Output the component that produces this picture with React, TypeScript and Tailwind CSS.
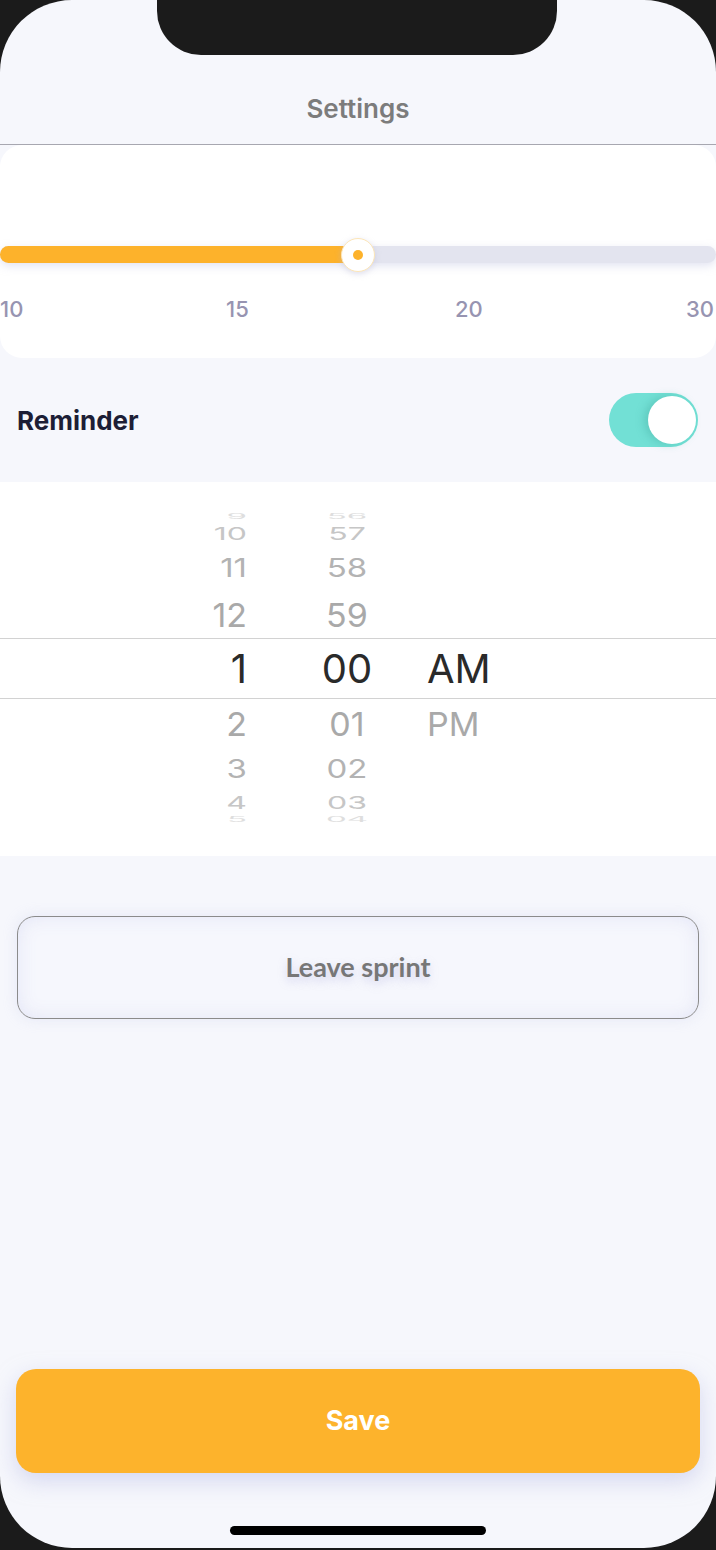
import React from "react";

type Row = {
  h: string;
  m: string;
  ap: string;
  band: string;
  text: string;
  scale: string;
};

const rows: Row[] = [
  { h: "9", m: "56", ap: "", band: "h-[14px]", text: "text-[33px] text-[#dedede]", scale: "scale-y-[0.22]" },
  { h: "10", m: "57", ap: "", band: "h-[21px]", text: "text-[32px] text-[#c6c6c6]", scale: "scale-y-[0.55]" },
  { h: "11", m: "58", ap: "", band: "h-[48px]", text: "text-[33px] text-[#b3b3b3]", scale: "scale-y-[0.78]" },
  { h: "12", m: "59", ap: "", band: "h-[45px]", text: "text-[34px] text-[#a9a9a9]", scale: "scale-y-[0.97]" },
];
const rowsBelow: Row[] = [
  { h: "2", m: "01", ap: "PM", band: "h-[50px]", text: "text-[34px] text-[#a9a9a9]", scale: "scale-y-[0.97]" },
  { h: "3", m: "02", ap: "", band: "h-[42px]", text: "text-[33px] text-[#b3b3b3]", scale: "scale-y-[0.78]" },
  { h: "4", m: "03", ap: "", band: "h-[25px]", text: "text-[32px] text-[#c6c6c6]", scale: "scale-y-[0.55]" },
  { h: "5", m: "04", ap: "", band: "h-[8px]", text: "text-[33px] text-[#dedede]", scale: "scale-y-[0.22]" },
];

function Band({ r }: { r: Row }) {
  return (
    <div className={`flex items-center overflow-hidden ${r.band}`}>
      <div className="w-[247px] text-right">
        <span className={`inline-block leading-none ${r.text} ${r.scale}`}>{r.h}</span>
      </div>
      <div className="ml-[50px] w-[100px] text-center">
        <span className={`inline-block leading-none ${r.text} ${r.scale}`}>{r.m}</span>
      </div>
      <div className="ml-[30px] text-left">
        <span className={`inline-block leading-none ${r.text} ${r.scale}`}>{r.ap}</span>
      </div>
    </div>
  );
}

export default function App() {
  return (
    <div className="w-[716px] h-[1550px] bg-[#1b1b1b]" style={{ fontFamily: "Inter, Roboto, sans-serif" }}>
      <div className="relative h-[1548px] rounded-[72px] bg-[#f6f7fc] overflow-hidden flex flex-col">
        {/* notch */}
        <div className="absolute left-[157px] top-0 w-[400px] h-[55px] bg-[#1b1b1b] rounded-b-[44px]" />

        {/* header */}
        <div className="h-[145px] pt-[96px] text-center border-b border-[#a7a7b0]">
          <span className="text-[26px] leading-[26px] font-semibold text-[#7c7c7c]">Settings</span>
        </div>

        {/* slider card */}
        <div className="h-[213px] bg-white rounded-[22px] flex flex-col pt-[101px]">
          <div className="relative h-[17px]">
            <div className="absolute inset-0 rounded-full bg-[#e3e4ef] shadow-[0_3px_8px_rgba(200,202,230,0.5)]" />
            <div className="absolute left-0 top-0 h-[17px] w-[358px] rounded-full bg-[#fdb22b]" />
            <div className="absolute left-[341px] top-[-8px] w-[34px] h-[34px] rounded-full bg-white border border-[#fde6b8] shadow-[0_2px_6px_rgba(180,180,210,0.4)] flex items-center justify-center">
              <div className="w-[10px] h-[10px] rounded-full bg-[#fdb22b]" />
            </div>
          </div>
          <div className="relative h-[24px] mt-[34px] text-[22px] leading-[24px] font-medium text-[#9794b1]">
            <span className="absolute left-0 top-0">10</span>
            <span className="absolute left-[226px] top-0">15</span>
            <span className="absolute left-[455px] top-0">20</span>
            <span className="absolute left-[686px] top-0">30</span>
          </div>
        </div>

        {/* reminder */}
        <div className="h-[124px] flex items-center justify-between pl-[17px] pr-[18px]">
          <span className="text-[26px] font-bold text-[#1d1e36]">Reminder</span>
          <div className="w-[89px] h-[54px] rounded-full bg-[#72e0d5] flex items-center justify-end pr-[2px]">
            <div className="w-[48px] h-[48px] rounded-full bg-white shadow-[-4px_0_8px_rgba(60,160,150,0.35)]" />
          </div>
        </div>

        {/* time picker */}
        <div className="bg-white pt-[28px] pb-[32px]" style={{ fontFamily: "Inter, 'Liberation Sans', sans-serif" }}>
          {rows.map((r, i) => (
            <Band key={"a" + i} r={r} />
          ))}
          <div className="h-[61px] border-y border-[#d2d2d2] flex items-center text-[40px] leading-none text-[#2a2a2a]">
            <div className="w-[247px] text-right">1</div>
            <div className="ml-[50px] w-[100px] text-center">00</div>
            <div className="ml-[30px] text-left">AM</div>
          </div>
          {rowsBelow.map((r, i) => (
            <Band key={"b" + i} r={r} />
          ))}
        </div>

        {/* leave sprint */}
        <div className="mt-[60px] mx-[17px] h-[103px] rounded-[18px] border-[1.5px] border-[#8b8b8b] bg-[#f6f7fd] shadow-[inset_0_0_18px_rgba(225,227,245,0.9),0_0_14px_rgba(225,227,245,0.8)] flex items-center justify-center">
          <span
            className="text-[27px] font-bold text-[#777777] [text-shadow:0_4px_10px_rgba(150,150,210,0.35)]"
            style={{ fontFamily: "Lato, Inter, sans-serif" }}
          >
            Leave sprint
          </span>
        </div>

        {/* save */}
        <div className="mt-auto mx-[16px] h-[104px] rounded-[20px] bg-[#fdb32c] shadow-[0_8px_22px_rgba(185,190,230,0.55)] flex items-center justify-center">
          <span className="text-[27px] font-bold text-white">Save</span>
        </div>

        {/* home indicator */}
        <div className="h-[75px] pt-[53px] flex justify-center">
          <div className="w-[256px] h-[9px] rounded-full bg-black" />
        </div>
      </div>
    </div>
  );
}
